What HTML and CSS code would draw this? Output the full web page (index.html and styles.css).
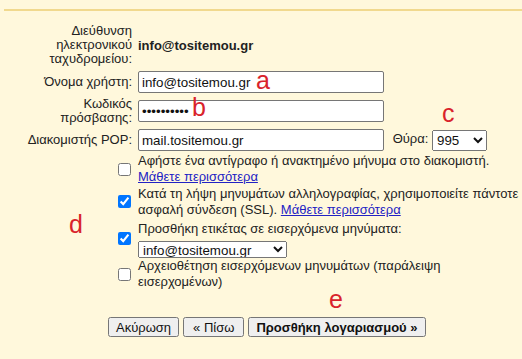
FILE: index.html
```html
<!DOCTYPE html>
<html lang="el">
  <head>
    <meta charset="UTF-8" />
    <meta name="viewport" content="width=device-width, initial-scale=1.0" />
    <title>Προσθήκη λογαριασμού POP</title>
    <link rel="stylesheet" href="styles.css">
  </head>
  <body>
    <div class="page">
      <div class="header"></div>

      <table class="form">
        <tr class="first">
          <td class="label">Διεύθυνση<br />ηλεκτρονικού<br />ταχυδρομείου:</td>
          <td class="value"><b>info@tositemou.gr</b></td>
        </tr>
        <tr>
          <td class="label">Όνομα χρήστη:</td>
          <td class="value"><input class="text" type="text" value="info@tositemou.gr" /></td>
        </tr>
        <tr>
          <td class="label">Κωδικός<br />πρόσβασης:</td>
          <td class="value"><input class="text" type="password" value="1234567890" /></td>
        </tr>
        <tr>
          <td class="label">Διακομιστής POP:</td>
          <td class="value">
            <input class="text" type="text" value="mail.tositemou.gr" />
            <span class="port">Θύρα:</span>
            <select class="port-select">
              <option>995</option>
              <option>110</option>
            </select>
          </td>
        </tr>
        <tr>
          <td class="label"><input class="check" type="checkbox" /></td>
          <td class="value option">
            Αφήστε ένα αντίγραφο ή ανακτημένο μήνυμα στο διακομιστή.<br />
            <a href="#">Μάθετε περισσότερα</a>
          </td>
        </tr>
        <tr class="ssl">
          <td class="label"><input class="check" type="checkbox" checked /></td>
          <td class="value option">
            Κατά τη λήψη μηνυμάτων αλληλογραφίας, χρησιμοποιείτε πάντοτε<br />
            ασφαλή σύνδεση (SSL). <a href="#">Μάθετε περισσότερα</a>
          </td>
        </tr>
        <tr class="with-select">
          <td class="label"><input class="check" type="checkbox" checked /></td>
          <td class="value option">
            Προσθήκη ετικέτας σε εισερχόμενα μηνύματα:
            <select class="label-select">
              <option>info@tositemou.gr</option>
            </select>
          </td>
        </tr>
        <tr>
          <td class="label"><input class="check" type="checkbox" /></td>
          <td class="value option">
            Αρχειοθέτηση εισερχόμενων μηνυμάτων (παράλειψη<br />
            εισερχομένων)
          </td>
        </tr>
      </table>

      <div class="buttons">
        <button>Ακύρωση</button>
        <button class="back">« Πίσω</button>
        <button class="primary">Προσθήκη λογαριασμού »</button>
      </div>

      <!-- γράμματα σημείωσης πάνω στη φόρμα -->
      <span class="mark mark-a">a</span>
      <span class="mark mark-b">b</span>
      <span class="mark mark-c">c</span>
      <span class="mark mark-d">d</span>
      <span class="mark mark-e">e</span>
    </div>
  </body>
</html>
```

FILE: styles.css
```css
* {
  box-sizing: border-box;
}

body {
  margin: 0;
  background-color: #fff8dc;
  font-family: "Liberation Sans", Arial, sans-serif;
  font-size: 13px;
  color: #222;
}

.page {
  position: relative;
  height: 359px;
  overflow: hidden;
}

.header {
  height: 11px;
  margin-left: 4px;
  border-bottom: 2px solid #f1d98e;
}

.form {
  border-collapse: collapse;
  margin-top: 11px;
}

.form td {
  padding: 2px 3px;
  vertical-align: middle;
}

.form .first td {
  padding-bottom: 3px;
}

.label {
  width: 135px;
  text-align: right;
  line-height: 14px;
}

.text {
  width: 246px;
  height: 22px;
  padding: 2px 3px;
  border: 1px solid #767676;
  border-radius: 2px;
  background: #fff;
  font-family: "Liberation Sans", Arial, sans-serif;
  font-size: 13.33px;
  color: #111;
  vertical-align: middle;
}

.port {
  margin-left: 5px;
}

select {
  font-family: "Liberation Sans", Arial, sans-serif;
  font-size: 13.33px;
  color: #111;
  vertical-align: middle;
}

.port-select {
  width: 55px;
  height: 21px;
}

.label-select {
  display: block;
  width: 149px;
  height: 17px;
  margin-top: 4px;
}

.check {
  margin: 3px 1px 3px 4px;
  vertical-align: middle;
}

.form td.option {
  line-height: 16px;
  padding-top: 0;
  padding-bottom: 0;
  white-space: nowrap;
}

.form .ssl td {
  padding-top: 1px;
}

.form .with-select td {
  padding-top: 3px;
}

.option a {
  color: #2222c4;
}

.buttons {
  display: flex;
  gap: 4px;
  margin-top: 27px;
  padding-left: 108px;
}

.buttons button {
  height: 20px;
  padding: 0 6px;
  font-family: "Liberation Sans", Arial, sans-serif;
  font-size: 13px;
  color: #111;
}

.buttons .back {
  padding: 0 8px;
}

.buttons .primary {
  font-weight: bold;
}

.mark {
  position: absolute;
  font-family: "Liberation Sans", Arial, sans-serif;
  font-size: 25px;
  line-height: 1;
  color: #d9232b;
}

.mark-a {
  left: 256px;
  top: 68px;
}

.mark-b {
  left: 192px;
  top: 95px;
}

.mark-c {
  left: 442px;
  top: 101px;
}

.mark-d {
  left: 69px;
  top: 212px;
}

.mark-e {
  left: 329px;
  top: 287px;
}
```
